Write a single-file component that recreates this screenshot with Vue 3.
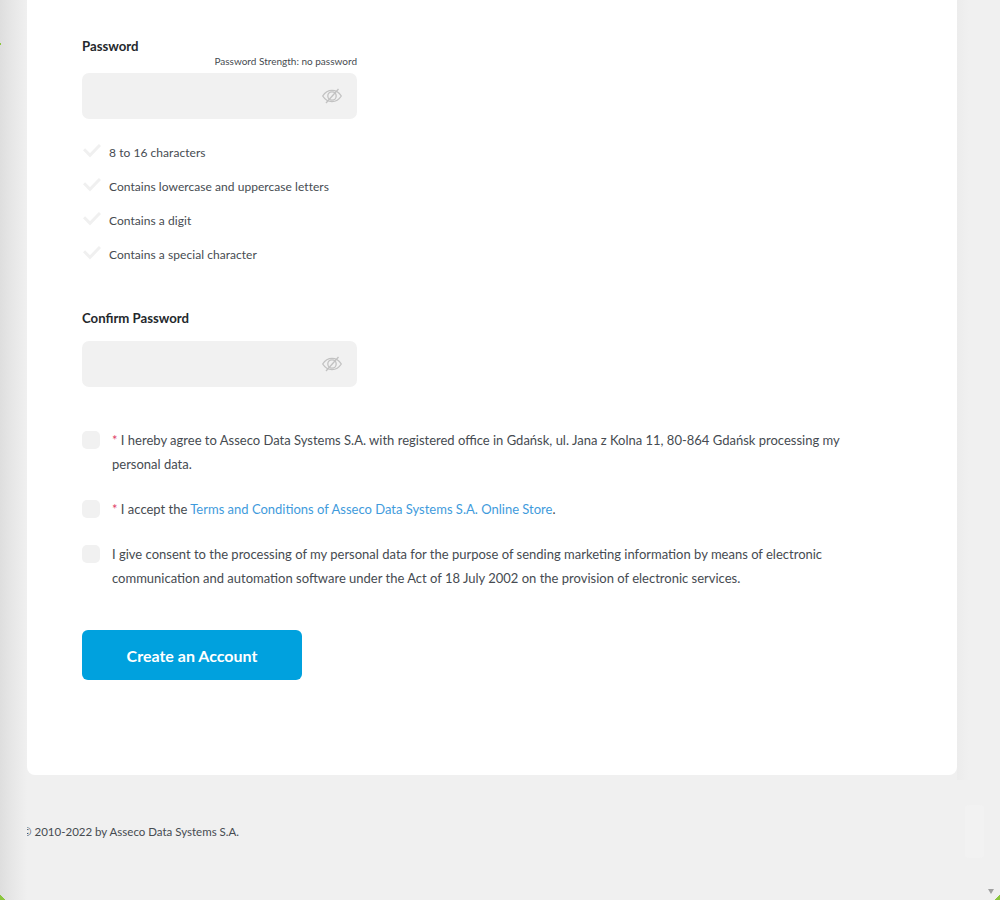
<template>
  <div class="page">
    <div class="side_shade"></div>
    <div class="right_shade"></div>
    <div class="green_tick"></div>
    <div class="green_corner_left"></div>
    <div class="green_corner_right"></div>
    <div class="scroll_thumb"></div>
    <div class="scroll_arrow"></div>

    <main class="card">
      <form class="form" @submit.prevent>
        <div class="label_row">
          <label class="field_label">Password</label>
          <span class="strength">Password Strength: no password</span>
        </div>
        <div class="input_box">
          <svg class="eye" viewBox="0 0 20 16" width="20" height="16" fill="none" stroke="#c2c2c2" stroke-width="1.3">
            <path d="M0.7 8C3 4.4 6.2 2.4 10 2.4S17 4.4 19.3 8C17 11.6 13.8 13.6 10 13.6S3 11.6 0.7 8Z" />
            <circle cx="10" cy="8" r="4.2" />
            <path d="M16.5 1 4 15" />
          </svg>
        </div>

        <ul class="rules">
          <li class="rule" v-for="r in rules" :key="r">
            <svg class="check" viewBox="0 0 18 14" width="18" height="14" fill="none" stroke="#f0f0f0" stroke-width="3">
              <path d="M1 5.2 7 11.4 17 1" />
            </svg>
            <span>{{ r }}</span>
          </li>
        </ul>

        <label class="field_label confirm_label">Confirm Password</label>
        <div class="input_box">
          <svg class="eye" viewBox="0 0 20 16" width="20" height="16" fill="none" stroke="#c2c2c2" stroke-width="1.3">
            <path d="M0.7 8C3 4.4 6.2 2.4 10 2.4S17 4.4 19.3 8C17 11.6 13.8 13.6 10 13.6S3 11.6 0.7 8Z" />
            <circle cx="10" cy="8" r="4.2" />
            <path d="M16.5 1 4 15" />
          </svg>
        </div>

        <div class="consents">
          <div class="consent">
            <span class="box"></span>
            <p><span class="req">*</span> I hereby agree to Asseco Data Systems S.A. with registered office in Gdańsk, ul. Jana z Kolna 11, 80-864 Gdańsk processing my personal data.</p>
          </div>
          <div class="consent">
            <span class="box"></span>
            <p><span class="req">*</span> I accept the <a href="#" class="link">Terms and Conditions of Asseco Data Systems S.A. Online Store</a>.</p>
          </div>
          <div class="consent">
            <span class="box"></span>
            <p>I give consent to the processing of my personal data for the purpose of sending marketing information by means of electronic communication and automation software under the Act of 18 July 2002 on the provision of electronic services.</p>
          </div>
        </div>

        <button class="submit" type="submit">Create an Account</button>
      </form>
    </main>

    <footer class="footer">© 2010-2022 by Asseco Data Systems S.A.</footer>
  </div>
</template>

<script setup>
const rules = [
  '8 to 16 characters',
  'Contains lowercase and uppercase letters',
  'Contains a digit',
  'Contains a special character'
]
</script>

<style scoped>
* {
  margin: 0;
  padding: 0;
  box-sizing: border-box;
}

.page {
  position: relative;
  height: 900px;
  overflow: hidden;
  padding: 0 43px 0 27px;
  background: #f0f0f0;
  color: #464b51;
  font-family: Lato, "Noto Sans", sans-serif;
}

.side_shade {
  position: absolute;
  left: 0;
  top: 0;
  bottom: 0;
  width: 27px;
  background: linear-gradient(90deg, #dedede, #e6e6e6 40%, #f0f0f0);
}

.right_shade {
  position: absolute;
  left: 957px;
  top: 0;
  height: 780px;
  width: 12px;
  background: linear-gradient(90deg, #ececec, #f0f0f0);
}

.green_tick {
  position: absolute;
  left: 0;
  top: 43px;
  width: 1px;
  height: 2px;
  background: #8cc63f;
}

.green_corner_left {
  position: absolute;
  left: 0;
  bottom: 0;
  width: 5px;
  height: 6px;
  background: linear-gradient(45deg, #8cc63f 50%, transparent 50%);
}

.green_corner_right {
  position: absolute;
  right: 0;
  bottom: 0;
  width: 6px;
  height: 6px;
  background: linear-gradient(135deg, transparent 50%, #8cc63f 50%);
}

.scroll_thumb {
  position: absolute;
  left: 965px;
  top: 805px;
  width: 19px;
  height: 53px;
  border-radius: 4px;
  background: #f2f2f2;
}

.scroll_arrow {
  position: absolute;
  left: 988px;
  top: 889px;
  border-style: solid;
  border-width: 5px 3.5px 0;
  border-color: #a0a0a0 transparent transparent;
}

.card {
  position: relative;
  height: 775px;
  padding: 37px 55px 0;
  background: #fff;
  border-radius: 0 0 8px 8px;
}

.form {
  display: flex;
  flex-direction: column;
  align-items: flex-start;
}

.label_row {
  width: 275px;
  height: 36px;
  display: flex;
  flex-direction: column;
}

.field_label {
  font-size: 13.2px;
  line-height: 18px;
  font-weight: 700;
  color: #24282c;
}

.strength {
  align-self: flex-end;
  font-size: 10px;
  line-height: 13px;
}

.input_box {
  width: 275px;
  height: 46px;
  display: flex;
  align-items: center;
  justify-content: flex-end;
  padding-right: 15px;
  background: #f1f1f1;
  border-radius: 7px;
}

.rules {
  list-style: none;
  margin-top: 16px;
}

.rule {
  height: 34px;
  display: flex;
  align-items: center;
  gap: 8px;
  padding-left: 1px;
  font-size: 12px;
  letter-spacing: 0.05px;
}

.check {
  margin-top: -2px;
}

.confirm_label {
  margin-top: 38px;
  margin-bottom: 14px;
}

.consents {
  margin-top: 41px;
  display: flex;
  flex-direction: column;
  gap: 21px;
}

.consent {
  display: flex;
  gap: 12px;
  width: 760px;
}

.box {
  flex: none;
  width: 18px;
  height: 18px;
  margin-top: 3px;
  border-radius: 5px;
  background: #f1f1f1;
}

.consent p {
  font-size: 13px;
  line-height: 24px;
}

.req {
  color: #e0436a;
}

.link {
  color: #3f9bdc;
  text-decoration: none;
}

.submit {
  width: 220px;
  height: 50px;
  margin-top: 40px;
  border: 0;
  border-radius: 6px;
  background: #00a1de;
  color: #fff;
  font-family: inherit;
  font-size: 16px;
  font-weight: 700;
}

.footer {
  margin: 49px 0 0 -5px;
  font-size: 11.5px;
  line-height: 16px;
}
</style>

<style>
body {
  background: #f0f0f0;
}
</style>
